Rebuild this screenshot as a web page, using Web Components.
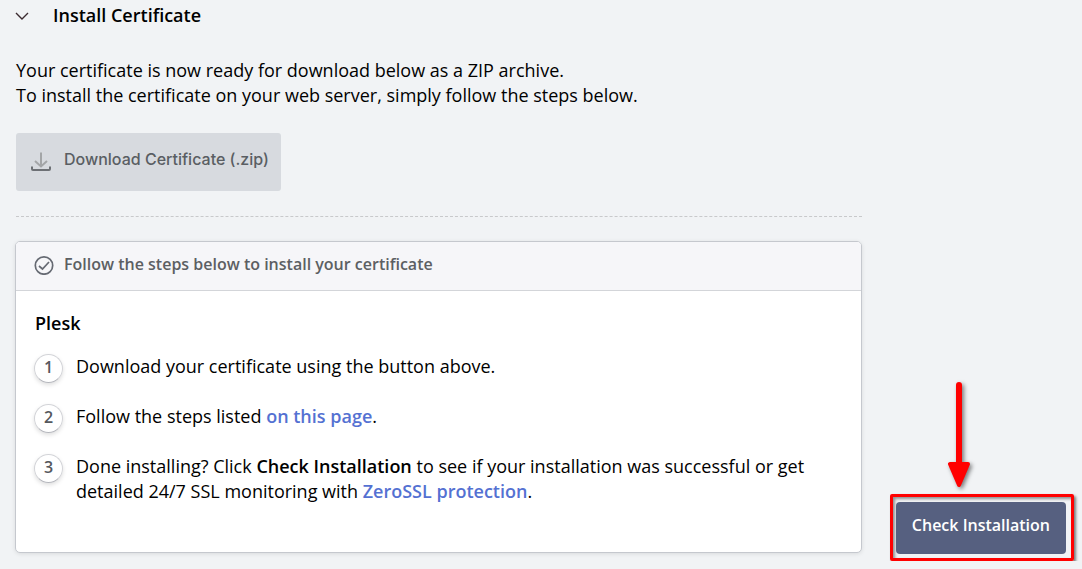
<!DOCTYPE html>
<html lang="en">
<head>
<meta charset="utf-8">
<meta name="viewport" content="width=device-width, initial-scale=1">
<title>Install Certificate</title>
<style>
  body {
    margin: 0;
    background: #f1f3f5;
    color: #000;
    font: 18px/25px "Open Sans", sans-serif;
  }

  p {
    margin: 0;
  }

  strong {
    font-weight: 600;
  }
</style>
</head>
<body>
<install-page>
  <section-heading slot="heading">Install Certificate</section-heading>
  <p>Your certificate is now ready for download below as a ZIP archive.<br>
  To install the certificate on your web server, simply follow the steps below.</p>
  <download-button>Download Certificate (.zip)</download-button>
  <steps-card>
    <span slot="title">Follow the steps below to install your certificate</span>
    <span slot="server">Plesk</span>
    <install-step number="1">Download your certificate using the button above.</install-step>
    <install-step number="2">Follow the steps listed <text-link>on this page</text-link>.</install-step>
    <install-step number="3">Done installing? Click <strong>Check Installation</strong> to see if your installation was successful or get<br>detailed 24/7 SSL monitoring with <text-link>ZeroSSL protection</text-link>.</install-step>
  </steps-card>
  <check-button slot="action">Check Installation</check-button>
</install-page>

<script>
/**
 * Creates a template from a string of markup.
 *
 * @param {string} html - The markup.
 * @returns {HTMLTemplateElement} - The template.
 */
function createTemplate (html) {
  const template = document.createElement('template')
  template.innerHTML = html.trim()
  return template
}

/**
 * Base class that clones the template of its subclass.
 */
class BaseElement extends HTMLElement {
  constructor () {
    super()
    this.attachShadow({ mode: 'open' })
      .appendChild(this.constructor.template.content.cloneNode(true))
  }
}

/**
 * The page: heading, content column and action column.
 */
customElements.define('install-page',
  class extends BaseElement {
    static template = createTemplate(`
      <style>
        :host {
          display: block;
          padding: 3px 8px 8px 15px;
        }

        .columns {
          display: grid;
          grid-template-columns: minmax(0, 1fr) auto;
          column-gap: 28px;
          align-items: end;
          margin-top: 30px;
        }

        .content {
          display: grid;
          row-gap: 24px;
        }

        ::slotted(p) {
          padding: 0 0 1px 1px;
        }
      </style>

      <slot name="heading"></slot>
      <div class="columns">
        <main class="content"><slot></slot></main>
        <slot name="action"></slot>
      </div>
    `)
  }
)

/**
 * The foldable section heading.
 */
customElements.define('section-heading',
  class extends BaseElement {
    static template = createTemplate(`
      <style>
        :host {
          display: block;
        }

        h2 {
          display: flex;
          align-items: center;
          gap: 24px;
          margin: 0;
          font-size: 18px;
          font-weight: 600;
        }

        svg {
          width: 14px;
          height: 8px;
        }
      </style>

      <h2>
        <svg viewBox="0 0 14 8" fill="none" stroke="#3b2a30" stroke-width="1.4" aria-hidden="true">
          <path d="M1 1l6 6 6-6"/>
        </svg>
        <slot></slot>
      </h2>
    `)
  }
)

/**
 * The download button with the dashed rule under it.
 */
customElements.define('download-button',
  class extends BaseElement {
    static template = createTemplate(`
      <style>
        :host {
          display: block;
          margin-left: 1px;
          padding-bottom: 25px;
          border-bottom: 1px dashed #c8c9cb;
        }

        button {
          display: flex;
          align-items: center;
          gap: 12px;
          height: 58px;
          padding: 0 12px 5px 14px;
          border: 0;
          border-radius: 3px;
          background: #d7dadf;
          color: #5a5e63;
          font: 500 16px/25px Inter, sans-serif;
          cursor: pointer;
        }

        svg {
          width: 22px;
          height: 20px;
          padding-top: 4px;
        }
      </style>

      <button type="button">
        <svg viewBox="0 0 22 20" fill="none" stroke-width="2" aria-hidden="true">
          <path d="M11 0.5v14M5 9l6 5.500 6-5.500" stroke="#a3a5a7"/>
          <path d="M2 14.500v2.500q0 1 1 1h16q1 0 1-1v-2.500" stroke="#6d7075"/>
        </svg>
        <slot></slot>
      </button>
    `)
  }
)

/**
 * The card that lists the steps.
 */
customElements.define('steps-card',
  class extends BaseElement {
    static template = createTemplate(`
      <style>
        :host {
          display: block;
          overflow: hidden;
          border: 1px solid #c5c8ce;
          border-radius: 5px;
          background: #fff;
          box-shadow: 0 1px 4px rgba(0, 0, 0, 0.1);
        }

        header {
          display: flex;
          align-items: center;
          gap: 10px;
          padding: 10px 18px 13px;
          border-bottom: 1px solid #d3d5d9;
          background: #f6f6f9;
          color: #5c5f63;
          font-size: 16px;
          font-weight: 600;
        }

        svg {
          width: 20px;
          height: 20px;
        }

        .body {
          padding: 20px 18px 48px;
        }

        h3 {
          margin: 0 0 18px 1px;
          font-size: 18px;
          font-weight: 600;
        }

        .steps {
          display: grid;
          row-gap: 25px;
        }
      </style>

      <header>
        <svg viewBox="0 0 20 20" fill="none" stroke="#666a73" stroke-width="1.700" aria-hidden="true">
          <circle cx="10" cy="10.500" r="8.700"/>
          <path d="M5 11l3.500 3 6.500-7"/>
        </svg>
        <slot name="title"></slot>
      </header>
      <div class="body">
        <h3><slot name="server"></slot></h3>
        <div class="steps" role="list"><slot></slot></div>
      </div>
    `)
  }
)

/**
 * One numbered step.
 */
customElements.define('install-step',
  class extends BaseElement {
    static template = createTemplate(`
      <style>
        :host {
          display: flex;
          align-items: flex-start;
          gap: 13px;
        }

        .number {
          box-sizing: border-box;
          flex: none;
          width: 29px;
          height: 29px;
          margin: 0 0 -4px;
          border: 1px solid #d3d4d8;
          border-bottom-color: #b4b6bc;
          border-radius: 50%;
          box-shadow: 0 2px 4px rgba(0, 0, 0, 0.13);
          color: #55585d;
          font-size: 16px;
          font-weight: 600;
          line-height: 25px;
          text-align: center;
        }
      </style>

      <span class="number"></span>
      <div><slot></slot></div>
    `)

    connectedCallback () {
      this.setAttribute('role', 'listitem')
      this.shadowRoot.querySelector('.number').textContent = this.getAttribute('number')
    }
  }
)

/**
 * A link inside running text.
 */
customElements.define('text-link',
  class extends BaseElement {
    static template = createTemplate(`
      <style>
        :host {
          display: inline;
        }

        a {
          color: #5471d2;
          font-weight: 600;
          text-decoration: none;
        }

        a:hover {
          text-decoration: underline;
        }
      </style><a href="#"><slot></slot></a>
    `)
  }
)

/**
 * The check button with a red frame and an arrow that points at it.
 */
customElements.define('check-button',
  class extends BaseElement {
    static template = createTemplate(`
      <style>
        :host {
          display: block;
          position: relative;
          margin-bottom: -8px;
        }

        .frame {
          padding: 5px 5px 4px 3px;
          border: 3px solid #f00;
          border-radius: 2px;
          box-shadow: 2px 2px 3px rgba(0, 0, 0, 0.5), inset 2px 2px 3px rgba(0, 0, 0, 0.4);
        }

        button {
          display: block;
          height: 52px;
          padding: 0 16px 5px;
          border: 0;
          border-radius: 4px;
          background: #566080;
          color: #fff;
          font: 600 16px/25px "Open Sans", sans-serif;
          cursor: pointer;
        }

        svg {
          position: absolute;
          bottom: 100%;
          left: 50%;
          width: 32px;
          height: 116px;
          margin-left: -39px;
          filter: drop-shadow(2px 2px 2px rgba(0, 0, 0, 0.5));
        }
      </style>

      <svg viewBox="0 0 32 116" fill="#f00" stroke="#f00" stroke-linecap="round" stroke-linejoin="round" aria-hidden="true">
        <path d="M16 7v80" stroke-width="6"/>
        <path d="M7 86h18l-9 21z" stroke-width="4"/>
      </svg>
      <div class="frame">
        <button type="button"><slot></slot></button>
      </div>
    `)
  }
)
</script>
</body>
</html>
